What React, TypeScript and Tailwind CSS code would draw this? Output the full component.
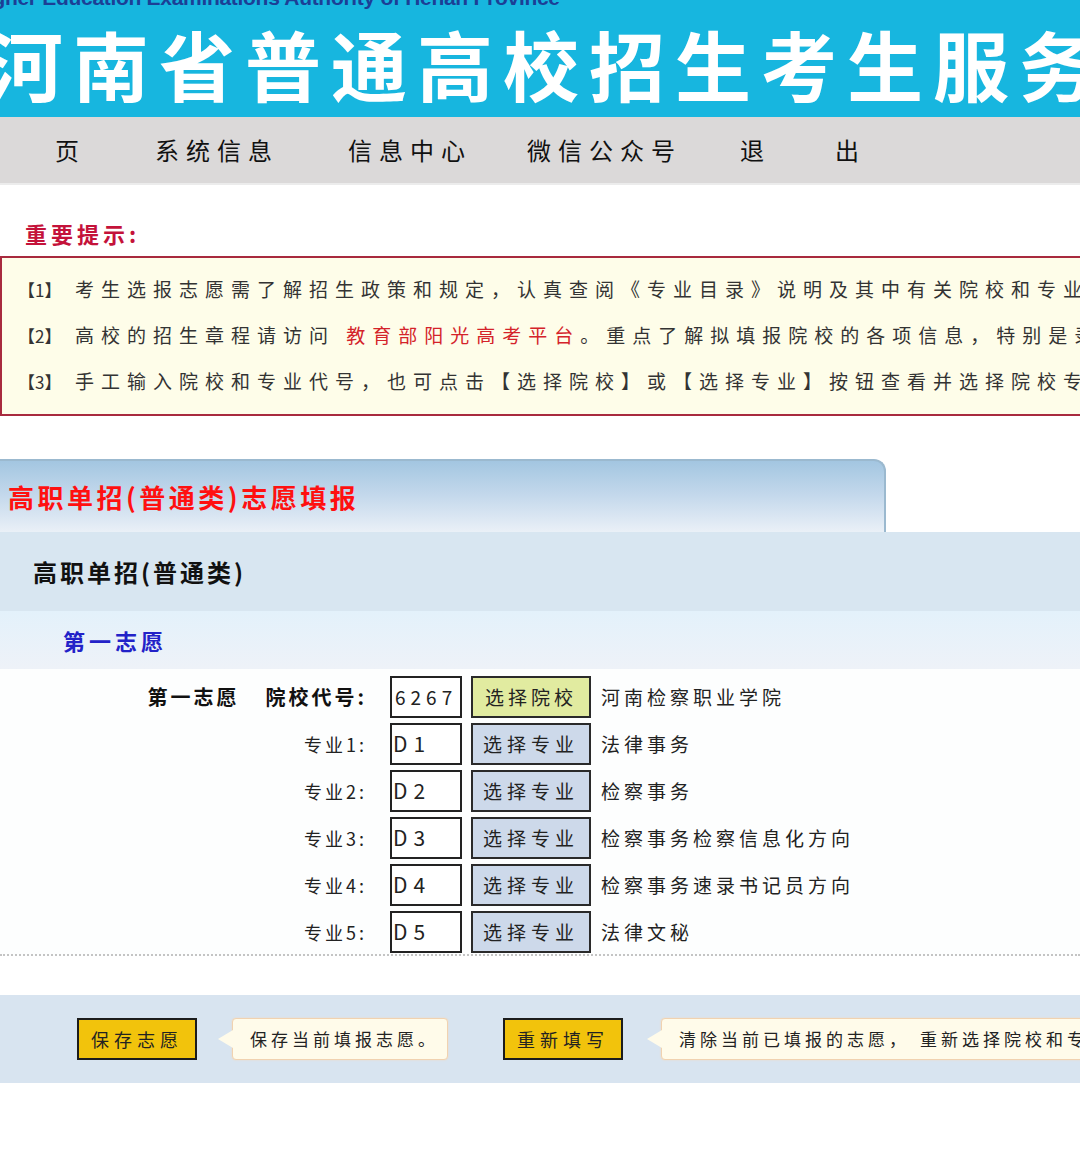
import React from "react";

const cjk = "font-['Noto_Sans_CJK_SC','Noto_Sans',sans-serif]";

const navItems: { label: string; w: string }[] = [
  { label: "页", w: "w-[100px]" },
  { label: "系统信息", w: "w-[193px]" },
  { label: "信息中心", w: "w-[179px]" },
  { label: "微信公众号", w: "w-[213px]" },
  { label: "退", w: "w-[95px]" },
  { label: "出", w: "w-[60px]" },
];

const majors = [
  { n: 1, code: "D1", name: "法律事务" },
  { n: 2, code: "D2", name: "检察事务" },
  { n: 3, code: "D3", name: "检察事务检察信息化方向" },
  { n: 4, code: "D4", name: "检察事务速录书记员方向" },
  { n: 5, code: "D5", name: "法律文秘" },
];

function Tip({ children }: { children: React.ReactNode }) {
  return (
    <div className="relative flex h-[42px] items-center rounded-[4px] border border-[#f1d2b0] bg-[#fffbea] pl-[17px] pr-[8px] shadow-[0_0_2px_#f3d9bd] whitespace-nowrap">
      <span className="absolute left-[-15px] top-1/2 -translate-y-1/2 h-0 w-0 border-y-[9px] border-r-[15px] border-y-transparent border-r-[#fffbea]" />
      <span className="text-[17px] tracking-[4px] text-[#222]">{children}</span>
    </div>
  );
}

function GoldButton({ children }: { children: React.ReactNode }) {
  return (
    <div className="flex h-[42px] w-[120px] shrink-0 items-center justify-center border-2 border-[#1c1c1c] bg-[#f2c30c] text-[18px] tracking-[5px] text-[#222]">
      {children}
    </div>
  );
}

export default function App() {
  return (
    <div className={`${cjk} w-[1080px] min-h-[1173px] overflow-hidden bg-white`}>
      {/* banner */}
      <div className="h-[117px] overflow-hidden bg-[#17b6df] whitespace-nowrap">
        <div className="-mt-[13px] ml-[-28px] h-[22px] font-['Liberation_Sans',sans-serif] text-[21px] font-bold leading-[22px] tracking-[-0.3px] text-[#1c3f96]">
          Higher Education Examinations Authority of Henan Province
        </div>
        <div className="mt-[14px] ml-[-13px] text-[76px] font-bold leading-[80px] tracking-[10px] text-white">
          河南省普通高校招生考生服务平台
        </div>
      </div>

      {/* navigation */}
      <div className="flex h-[68px] items-center border-b-2 border-[#ececec] bg-[#dbd9d9] pl-[55px]">
        {navItems.map((it) => (
          <div key={it.label} className={`${it.w} shrink-0 text-[24px] tracking-[7px] text-[#111]`}>
            {it.label}
          </div>
        ))}
      </div>

      {/* important notes */}
      <div className="pl-[25px] pt-[33px] pb-[8px] text-[22px] font-bold leading-[30px] tracking-[4px] text-[#c4123a]">
        重要提示:
      </div>
      <div className="border-y-2 border-l-2 border-[#a82a3e] bg-[#fefde9] pl-[16px] pt-[8px] pb-[10px] whitespace-nowrap text-[19px] leading-[45px] tracking-[7px] text-[#333]">
        <div>
          <span className="inline-block w-[57px] tracking-[0px] text-[17px]">【1】</span>
          考生选报志愿需了解招生政策和规定，认真查阅《专业目录》说明及其中有关院校和专业的具体要求。
        </div>
        <div>
          <span className="inline-block w-[57px] tracking-[0px] text-[17px]">【2】</span>
          高校的招生章程请访问 <span className="text-[#d4232a]">教育部阳光高考平台</span>。重点了解拟填报院校的各项信息，特别是录取规则。
        </div>
        <div>
          <span className="inline-block w-[57px] tracking-[0px] text-[17px]">【3】</span>
          手工输入院校和专业代号，也可点击【选择院校】或【选择专业】按钮查看并选择院校专业。
        </div>
      </div>

      {/* tab header */}
      <div className="mt-[43px] flex h-[73px] w-[886px] items-center rounded-tr-[12px] border-t-2 border-r-2 border-[#9bb9cf] bg-gradient-to-b from-[#a3c6e1] via-[#c5d9ec] to-[#eaf0f7] pl-[8px]">
        <span className="text-[26px] font-bold tracking-[3.5px] text-[#ff1010]">高职单招(普通类)志愿填报</span>
      </div>

      <div className="flex h-[79px] items-center bg-[#d8e6f1] pl-[33px]">
        <span className="text-[24px] font-bold tracking-[3px] text-[#111]">高职单招(普通类)</span>
      </div>

      <div className="flex h-[58px] items-center bg-gradient-to-b from-[#e3f1fb] to-[#eef2f8] pl-[63px]">
        <span className="text-[22px] font-bold tracking-[4px] text-[#2222c8]">第一志愿</span>
      </div>

      {/* form */}
      <div className="flex flex-col gap-[5px] border-b-2 border-dotted border-[#c4c4c4] bg-[#fdfefe] pt-[7px] pb-[1px]">
        <div className="flex h-[42px] items-center">
          <div className="w-[367px] shrink-0 text-right text-[20px] font-bold tracking-[3px] text-[#111]">
            第一志愿<span className="inline-block w-[26px]" />院校代号:
          </div>
          <div className="ml-[23px] flex h-[42px] w-[72px] shrink-0 items-center border-2 border-[#222] bg-white pl-[3px] text-[19px] tracking-[5px] text-[#222]">
            6267
          </div>
          <div className="ml-[9px] flex h-[42px] w-[120px] shrink-0 items-center justify-center border-2 border-[#2a2a2a] bg-[#e1eba0] text-[19px] tracking-[4px] text-[#222]">
            选择院校
          </div>
          <div className="ml-[10px] text-[19px] tracking-[4px] text-[#222]">河南检察职业学院</div>
        </div>
        {majors.map((m) => (
          <div key={m.n} className="flex h-[42px] items-center">
            <div className="w-[367px] shrink-0 text-right text-[18px] tracking-[3px] text-[#222]">
              专业{m.n}:
            </div>
            <div className="ml-[23px] flex h-[42px] w-[72px] shrink-0 items-center border-2 border-[#222] bg-white pl-[1px] text-[21px] tracking-[6px] text-[#222]">
              {m.code}
            </div>
            <div className="ml-[9px] flex h-[42px] w-[120px] shrink-0 items-center justify-center border-2 border-[#2a2a2a] bg-[#cdd9ea] text-[19px] tracking-[5px] text-[#222]">
              选择专业
            </div>
            <div className="ml-[10px] text-[19px] tracking-[4px] text-[#222]">{m.name}</div>
          </div>
        ))}
      </div>

      {/* action bar */}
      <div className="mt-[39px] flex h-[88px] items-center bg-[#d8e4f0] pl-[77px] whitespace-nowrap">
        <GoldButton>保存志愿</GoldButton>
        <div className="ml-[35px]">
          <Tip>保存当前填报志愿。</Tip>
        </div>
        <div className="ml-[55px]">
          <GoldButton>重新填写</GoldButton>
        </div>
        <div className="ml-[38px]">
          <Tip>
            清除当前已填报的志愿，<span className="inline-block w-[10px]" />重新选择院校和专业。
          </Tip>
        </div>
      </div>
    </div>
  );
}
